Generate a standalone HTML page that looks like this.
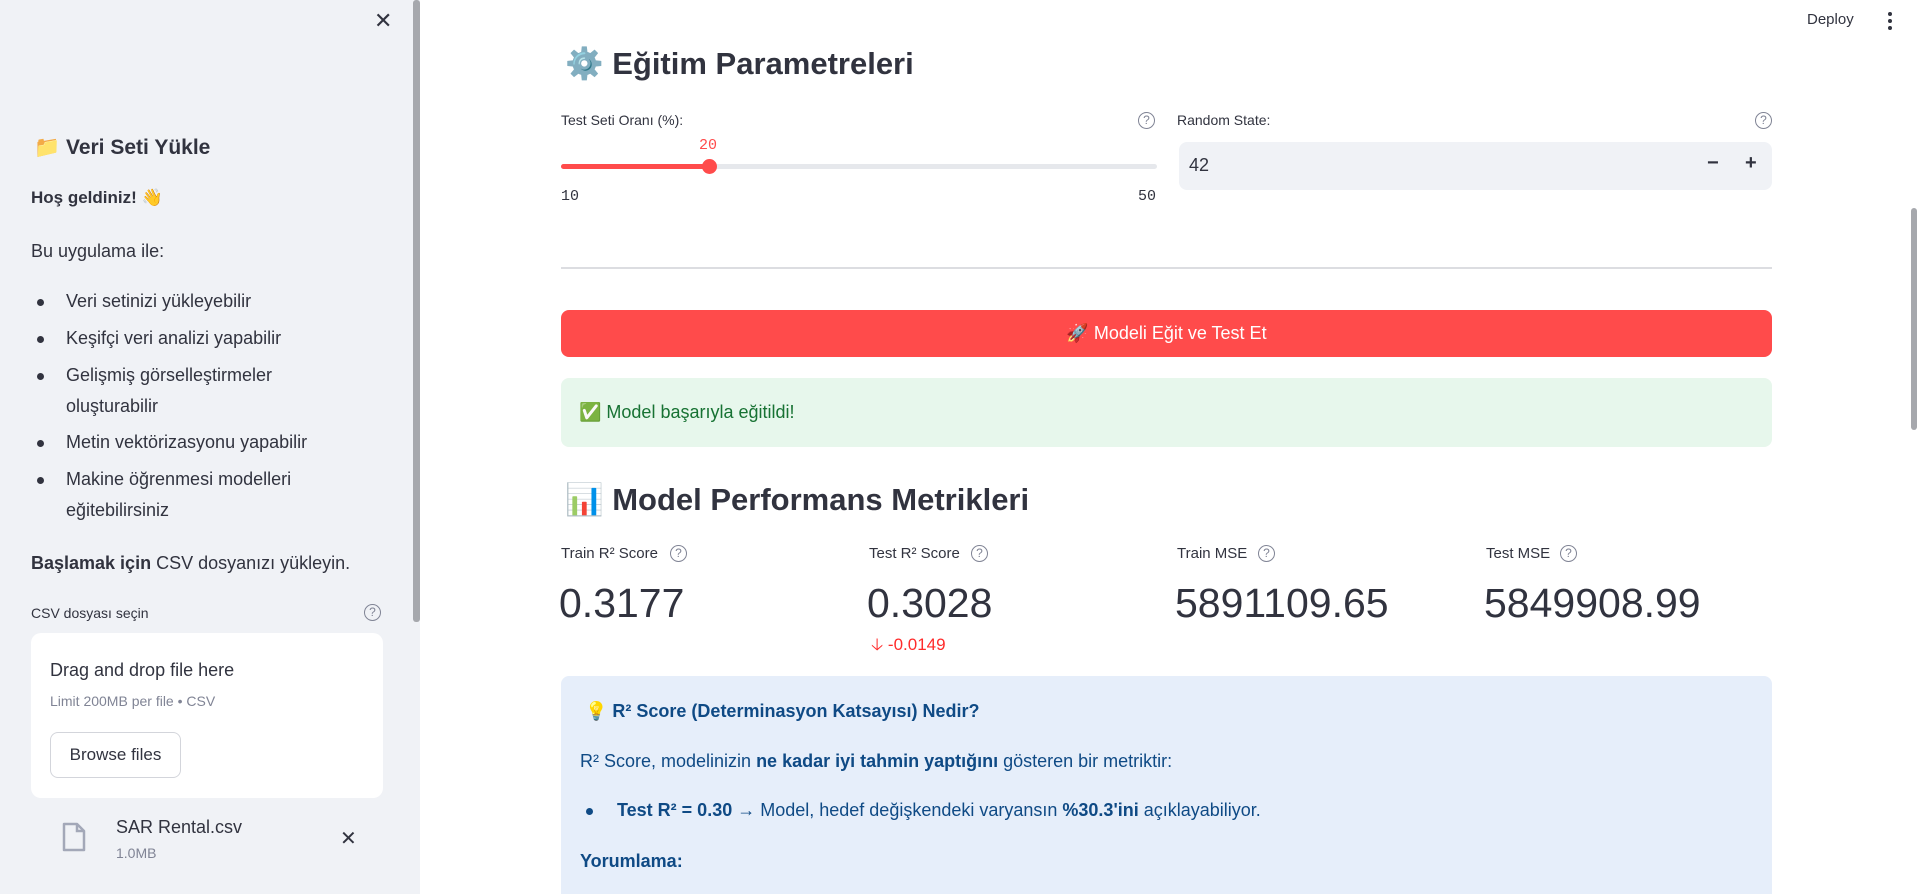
<!DOCTYPE html>
<html style="overflow:hidden;height:894px"><head><meta charset="utf-8">
<style>
*{box-sizing:border-box;margin:0;padding:0}
body{width:1919px;height:894px;overflow:hidden;background:#fff;font-family:"Liberation Sans","Noto Sans CJK JP",sans-serif;color:#31333f;position:relative;font-size:18px}
.a{position:absolute;white-space:nowrap}
#sb{position:absolute;left:0;top:0;width:420px;height:894px;background:#f0f2f6}
#sbs{position:absolute;left:413px;top:0;width:7px;height:622px;background:#a6a8ad;border-radius:3px}
.bul{position:absolute;left:37px;width:7px;height:7px;border-radius:50%;background:#31333f}
.help{position:absolute;width:17px;height:17px;border:1.5px solid #808495;border-radius:50%;font-size:12px;color:#808495;text-align:center;line-height:14px}
.lbl{font-size:14px}
.mv{font-size:41px;top:580px}
.ml{font-size:15px;top:545px}
</style></head><body>
<div id="sb"></div><div id="sbs"></div>
<div class="a" style="left:374px;top:8px;font-size:22px;color:#31333f">✕</div>
<div class="a" style="left:34px;top:136px;font-size:21px;font-weight:bold">📁 Veri Seti Yükle</div>
<div class="a" style="left:31px;top:188px;font-weight:bold;font-size:17px">Hoş geldiniz! 👋</div>
<div class="a" style="left:31px;top:241px">Bu uygulama ile:</div>
<div class="bul" style="top:299px"></div><div class="a" style="left:66px;top:291px">Veri setinizi yükleyebilir</div>
<div class="bul" style="top:336px"></div><div class="a" style="left:66px;top:328px">Keşifçi veri analizi yapabilir</div>
<div class="bul" style="top:373px"></div><div class="a" style="left:66px;top:365px">Gelişmiş görselleştirmeler</div>
<div class="a" style="left:66px;top:396px">oluşturabilir</div>
<div class="bul" style="top:440px"></div><div class="a" style="left:66px;top:432px">Metin vektörizasyonu yapabilir</div>
<div class="bul" style="top:477px"></div><div class="a" style="left:66px;top:469px">Makine öğrenmesi modelleri</div>
<div class="a" style="left:66px;top:500px">eğitebilirsiniz</div>
<div class="a" style="left:31px;top:553px"><b>Başlamak için</b> CSV dosyanızı yükleyin.</div>
<div class="a lbl" style="left:31px;top:605px">CSV dosyası seçin</div>
<div class="help" style="left:364px;top:604px">?</div>
<div class="a" style="left:31px;top:633px;width:352px;height:165px;background:#fff;border-radius:10px"></div>
<div class="a" style="left:50px;top:660px">Drag and drop file here</div>
<div class="a" style="left:50px;top:693px;font-size:14px;color:#808495">Limit 200MB per file • CSV</div>
<div class="a" style="left:50px;top:732px;width:131px;height:46px;border:1px solid #d3d5db;border-radius:8px;background:#fff;text-align:center;line-height:44px;font-size:17px">Browse files</div>
<svg class="a" style="left:62px;top:822px" width="24" height="30" viewBox="0 0 24 30"><path d="M2 2h13l7 7v19H2z" fill="none" stroke="#a3a8b8" stroke-width="2.5" stroke-linejoin="round"/><path d="M15 2v7h7" fill="none" stroke="#a3a8b8" stroke-width="2.5"/></svg>
<div class="a" style="left:116px;top:817px">SAR Rental.csv</div>
<div class="a" style="left:116px;top:845px;font-size:14px;color:#808495">1.0MB</div>
<div class="a" style="left:340px;top:826px;font-size:20px">✕</div>

<div class="a" style="left:1807px;top:11px;font-size:15px">Deploy</div>
<div class="a" style="left:1888px;top:12px;width:4px;height:4px;border-radius:50%;background:#31333f;box-shadow:0 7px 0 #31333f,0 14px 0 #31333f"></div>
<div class="a" style="left:1911px;top:208px;width:6px;height:222px;background:#a6a8ad;border-radius:3px"></div>

<div class="a" style="left:565px;top:45px;font-size:31px;font-weight:bold">⚙️ Eğitim Parametreleri</div>
<div class="a lbl" style="left:561px;top:112px">Test Seti Oranı (%):</div>
<div class="help" style="left:1138px;top:112px">?</div>
<div class="a" style="left:699px;top:137px;font-family:'Liberation Mono',monospace;font-size:15px;color:#ff4b4b">20</div>
<div class="a" style="left:561px;top:164px;width:596px;height:5px;background:#e6e8ec;border-radius:3px"></div>
<div class="a" style="left:561px;top:164px;width:149px;height:5px;background:#ff4b4b;border-radius:3px"></div>
<div class="a" style="left:702px;top:159px;width:15px;height:15px;border-radius:50%;background:#ff4b4b"></div>
<div class="a" style="left:561px;top:188px;font-family:'Liberation Mono',monospace;font-size:15px">10</div>
<div class="a" style="left:1138px;top:188px;font-family:'Liberation Mono',monospace;font-size:15px">50</div>
<div class="a lbl" style="left:1177px;top:112px">Random State:</div>
<div class="help" style="left:1755px;top:112px">?</div>
<div class="a" style="left:1179px;top:142px;width:593px;height:48px;background:#f0f2f6;border-radius:8px"></div>
<div class="a" style="left:1189px;top:155px">42</div>
<div class="a" style="left:1707px;top:152px;font-size:20px;font-weight:bold">−</div>
<div class="a" style="left:1745px;top:152px;font-size:20px;font-weight:bold">+</div>
<div class="a" style="left:561px;top:267px;width:1211px;height:2px;background:#dcdde1"></div>
<div class="a" style="left:561px;top:310px;width:1211px;height:47px;background:#ff4b4b;border-radius:8px;color:#fff;text-align:center;line-height:47px">🚀 Modeli Eğit ve Test Et</div>
<div class="a" style="left:561px;top:378px;width:1211px;height:69px;background:#e7f7ec;border-radius:8px"></div>
<div class="a" style="left:579px;top:402px;color:#177233">✅ Model başarıyla eğitildi!</div>
<div class="a" style="left:565px;top:481px;font-size:31px;font-weight:bold">📊 Model Performans Metrikleri</div>
<div class="a ml" style="left:561px">Train R² Score</div><div class="help" style="left:670px;top:545px">?</div>
<div class="a ml" style="left:869px">Test R² Score</div><div class="help" style="left:971px;top:545px">?</div>
<div class="a ml" style="left:1177px">Train MSE</div><div class="help" style="left:1258px;top:545px">?</div>
<div class="a ml" style="left:1486px">Test MSE</div><div class="help" style="left:1560px;top:545px">?</div>
<div class="a mv" style="left:559px">0.3177</div>
<div class="a mv" style="left:867px">0.3028</div>
<div class="a mv" style="left:1175px">5891109.65</div>
<div class="a mv" style="left:1484px">5849908.99</div>
<div class="a" style="left:871px;top:632px;font-size:17px;color:#ff2b2b">🡣 -0.0149</div>
<div class="a" style="left:561px;top:676px;width:1211px;height:218px;background:#e6eefa;border-radius:8px 8px 0 0"></div>
<div class="a" style="left:585px;top:701px;color:#0f4a85;font-weight:bold">💡 R² Score (Determinasyon Katsayısı) Nedir?</div>
<div class="a" style="left:580px;top:751px;color:#0f4a85">R² Score, modelinizin <b>ne kadar iyi tahmin yaptığını</b> gösteren bir metriktir:</div>
<div class="a" style="left:586px;top:808px;width:7px;height:7px;border-radius:50%;background:#0f4a85"></div>
<div class="a" style="left:617px;top:800px;color:#0f4a85"><b>Test R² = 0.30</b> → Model, hedef değişkendeki varyansın <b>%30.3'ini</b> açıklayabiliyor.</div>
<div class="a" style="left:580px;top:851px;color:#0f4a85;font-weight:bold">Yorumlama:</div>
</body></html>
